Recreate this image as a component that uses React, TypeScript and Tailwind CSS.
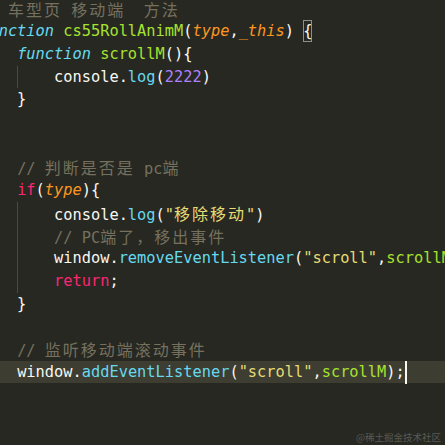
import React from "react";

const CJK_RE = /([\u3000-\u303f\u4e00-\u9fff\uff00-\uffef]+)/;

function cj(s: string): React.ReactNode[] {
  return s.split(CJK_RE).map((part, i) =>
    i % 2 === 1 ? (
      <span
        key={i}
        className="font-['Noto_Sans_CJK_SC',sans-serif] text-[16px] tracking-[2px]"
      >
        {part}
      </span>
    ) : (
      <React.Fragment key={i}>{part}</React.Fragment>
    )
  );
}

const Cm = ({ t }: { t: string }) => <span className="text-[#75715e]">{cj(t)}</span>;
const K = ({ t }: { t: string }) => <span className="text-[#f92672]">{t}</span>;
const St = ({ t }: { t: string }) => <span className="text-[#66d9ef] italic">{t}</span>;
const F = ({ t }: { t: string }) => <span className="text-[#a6e22e]">{t}</span>;
const P = ({ t }: { t: string }) => <span className="text-[#fd971f] italic">{t}</span>;
const N = ({ t }: { t: string }) => <span className="text-[#ae81ff]">{t}</span>;
const S = ({ t }: { t: string }) => <span className="text-[#e6db74]">{cj(t)}</span>;
const Sp = ({ t }: { t: string }) => <span className="text-[#66d9ef]">{t}</span>;

const Guide = () => (
  <span className="inline-block w-[4ch] h-[22.7px] align-top border-l border-[#4a4a44]" />
);

function Line({
  children,
  active = false,
}: {
  children?: React.ReactNode;
  active?: boolean;
}) {
  return (
    <div
      className={
        active
          ? "h-[22.7px] leading-[22.7px] whitespace-pre bg-[#3e3d32]"
          : "h-[22.7px] leading-[22.7px] whitespace-pre"
      }
    >
      {children}
    </div>
  );
}

export default function App() {
  return (
    <div className="relative w-[445px] h-[445px] overflow-hidden bg-[#272822] text-[#f8f8f2] font-['DejaVu_Sans_Mono','Noto_Sans_CJK_SC',monospace] text-[15.33px]">
      <div className="ml-[-19.8px] mt-[-2.35px]">
        <Line>
          <Cm t="// 车型页 移动端  方法" />
        </Line>
        <Line>
          <St t="function" /> <F t="cs55RollAnimM" />(<P t="type" />,<P t="_this" />){" "}
          <span className="relative inline-block">
            {"{"}
            <span className="absolute inset-x-0 top-0 bottom-[1px] border border-[#8f908a]" />
          </span>
        </Line>
        <Line>
          {"    "}
          <St t="function" /> <F t="scrollM" />(){"{"}
        </Line>
        <Line>
          {"    "}
          <Guide />
          console.<Sp t="log" />(<N t="2222" />)
        </Line>
        <Line>{"    }"}</Line>
        <Line />
        <Line />
        <Line>
          {"    "}
          <Cm t="// 判断是否是 pc端" />
        </Line>
        <Line>
          {"    "}
          <K t="if" />(<P t="type" />){"{"}
        </Line>
        <Line>
          {"    "}
          <Guide />
          console.<Sp t="log" />(<S t={"\"移除移动\""} />)
        </Line>
        <Line>
          {"    "}
          <Guide />
          <Cm t="// PC端了，移出事件" />
        </Line>
        <Line>
          {"    "}
          <Guide />
          window.<Sp t="removeEventListener" />(<S t={"\"scroll\""} />,<F t="scrollM" />);
        </Line>
        <Line>
          {"    "}
          <Guide />
          <K t="return" />;
        </Line>
        <Line>{"    }"}</Line>
        <Line />
        <Line>
          {"    "}
          <Cm t="// 监听移动端滚动事件" />
        </Line>
        <Line active>
          {"    "}window.<Sp t="addEventListener" />(<S t={"\"scroll\""} />,<F t="scrollM" />);
          <span className="inline-block w-[2px] h-[23px] align-top bg-[#f8f8f0]" />
        </Line>
      </div>
      <div className="absolute right-[4px] bottom-[2px] font-['Noto_Sans_CJK_SC',sans-serif] text-[9.5px] leading-[12px] text-[#5a5a54]">
        @稀土掘金技术社区
      </div>
    </div>
  );
}
